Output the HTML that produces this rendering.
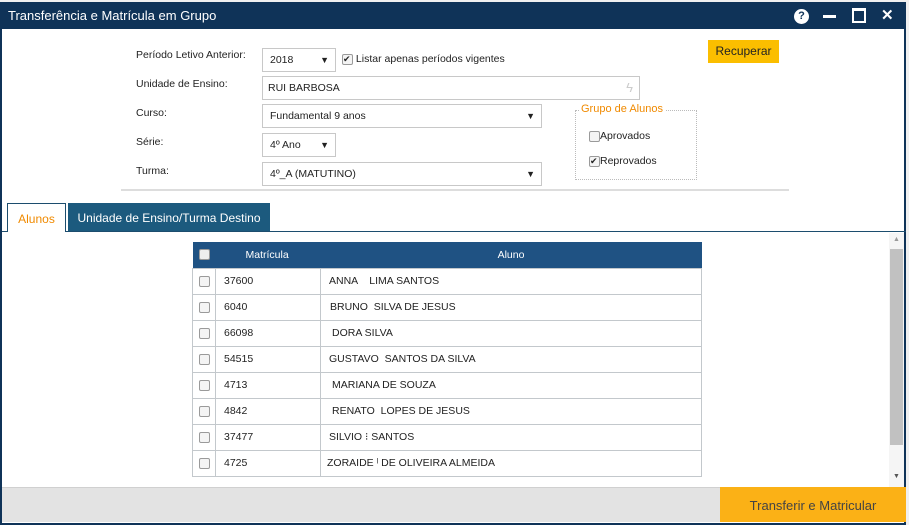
<!DOCTYPE html>
<html><head><meta charset="utf-8"><style>
*{box-sizing:border-box;margin:0;padding:0}
body{width:909px;height:525px;background:#f0f0f0;font-family:"Liberation Sans",sans-serif;font-size:11px;color:#222;position:relative;overflow:hidden}
.a{position:absolute}
.win{left:0;top:2px;width:906px;height:523px;background:#fff;border:2px solid #0f3358;border-top:0}
.title{left:0;top:2px;width:906px;height:27px;background:#0f3358;color:#fff;font-size:13px;line-height:27px;padding-left:8px}
.lbl{font-size:10.5px;color:#222}
.inp{background:#fff;border:1px solid #c8c8c8;height:24px;line-height:22px;padding-left:7px;font-size:10.5px}
.arr{position:absolute;right:6px;top:0;font-size:9px}
.cb{display:inline-block;width:11px;height:11px;border:1px solid #9a9a9a;border-radius:2px;background:#f4f4f4;vertical-align:middle}
table{border-collapse:collapse;position:absolute;left:192px;top:242px;width:510px}
td{border:1px solid #c3c8cc;height:26px;font-size:10.5px;padding:0}
th{background:#1f5283;color:#fff;font-weight:normal;height:26px;font-size:10.5px}
</style></head><body>
<div class="a win"></div>
<div class="a title">Transferência e Matrícula em Grupo</div>
<div class="a" style="left:794px;top:9px;width:15px;height:15px;border-radius:50%;background:#fff;color:#0f3358;font-weight:bold;font-size:11px;text-align:center;line-height:15px">?</div>
<div class="a" style="left:823px;top:15px;width:13px;height:3px;background:#fff"></div>
<div class="a" style="left:852px;top:8px;width:14px;height:15px;border:2px solid #fff;border-top-width:3px"></div>
<div class="a" style="left:881px;top:6px;color:#fff;font-weight:bold;font-size:15px">✕</div>

<div class="a lbl" style="left:136px;top:49px">Período Letivo Anterior:</div>
<div class="a inp" style="left:262px;top:48px;width:74px">2018<span class="arr">▼</span></div>
<div class="a" style="left:342px;top:53px;font-size:10.5px"><span class="cb" style="font-size:9px;line-height:9px">✔</span> Listar apenas períodos vigentes</div>
<div class="a" style="left:708px;top:40px;width:71px;height:23px;background:#fbbe00;line-height:23px;text-align:center;font-size:12px">Recuperar</div>

<div class="a lbl" style="left:136px;top:78px">Unidade de Ensino:</div>
<div class="a inp" style="left:262px;top:76px;width:378px;padding-left:5px">RUI BARBOSA<span class="arr" style="color:#ccc;font-size:13px">ϟ</span></div>

<div class="a lbl" style="left:136px;top:107px">Curso:</div>
<div class="a inp" style="left:262px;top:104px;width:280px">Fundamental 9 anos<span class="arr">▼</span></div>
<div class="a lbl" style="left:136px;top:136px">Série:</div>
<div class="a inp" style="left:262px;top:133px;width:74px">4º Ano<span class="arr">▼</span></div>
<div class="a lbl" style="left:136px;top:165px">Turma:</div>
<div class="a inp" style="left:262px;top:162px;width:280px">4º_A (MATUTINO)<span class="arr">▼</span></div>

<div class="a" style="left:575px;top:110px;width:122px;height:70px;border:1px dotted #bbb"></div>
<div class="a" style="left:579px;top:103px;background:#fff;color:#f08a00;padding:0 2px">Grupo de Alunos</div>
<div class="a" style="left:589px;top:130px;font-size:10.5px"><span class="cb"></span>Aprovados</div>
<div class="a" style="left:589px;top:155px;font-size:10.5px"><span class="cb" style="font-size:9px;line-height:9px">✔</span>Reprovados</div>
<div class="a" style="left:121px;top:189px;width:668px;height:2px;background:#ddd"></div>

<div class="a" style="left:2px;top:231px;width:904px;height:1px;background:#1c4d6e"></div>
<div class="a" style="left:7px;top:203px;width:59px;height:29px;background:#fff;border:1px solid #1c4d6e;border-bottom:0;color:#f08a00;font-size:12px;text-align:center;line-height:30px">Alunos</div>
<div class="a" style="left:68px;top:203px;width:202px;height:28px;background:#1c5a7e;color:#fff;font-size:12px;text-align:center;line-height:30px">Unidade de Ensino/Turma Destino</div>

<table>
<tr><th style="width:23px"><span class="cb" style="background:#eee"></span></th><th style="width:105px;text-align:left;padding-left:30px">Matrícula</th><th>Aluno</th></tr>
<tr><td style="text-align:center"><span class="cb"></span></td><td style="padding-left:8px">37600</td><td style="padding-left:8px">ANNA &nbsp;&nbsp; LIMA SANTOS</td></tr>
<tr><td style="text-align:center"><span class="cb"></span></td><td style="padding-left:8px">6040</td><td style="padding-left:9px">BRUNO &nbsp;SILVA DE JESUS</td></tr>
<tr><td style="text-align:center"><span class="cb"></span></td><td style="padding-left:8px">66098</td><td style="padding-left:11px">DORA SILVA</td></tr>
<tr><td style="text-align:center"><span class="cb"></span></td><td style="padding-left:8px">54515</td><td style="padding-left:8px">GUSTAVO &nbsp;SANTOS DA SILVA</td></tr>
<tr><td style="text-align:center"><span class="cb"></span></td><td style="padding-left:8px">4713</td><td style="padding-left:11px">MARIANA DE SOUZA</td></tr>
<tr><td style="text-align:center"><span class="cb"></span></td><td style="padding-left:8px">4842</td><td style="padding-left:11px">RENATO &nbsp;LOPES DE JESUS</td></tr>
<tr><td style="text-align:center"><span class="cb"></span></td><td style="padding-left:8px">37477</td><td style="padding-left:8px">SILVIO ⁝ SANTOS</td></tr>
<tr><td style="text-align:center"><span class="cb"></span></td><td style="padding-left:8px">4725</td><td style="padding-left:6px">ZORAIDE ˡ DE OLIVEIRA ALMEIDA</td></tr>
</table>

<div class="a" style="left:889px;top:233px;width:15px;height:254px;background:#f5f5f5"></div>
<div class="a" style="left:890px;top:249px;width:13px;height:196px;background:#c1c1c1"></div>
<div class="a" style="left:893px;top:236px;font-size:7px;color:#999">▲</div>
<div class="a" style="left:893px;top:473px;font-size:7px;color:#555">▼</div>

<div class="a" style="left:2px;top:487px;width:718px;height:35px;background:#e3e3e3;border-top:1px solid #d0d0d0"></div>
<div class="a" style="left:720px;top:487px;width:186px;height:35px;background:#fbb116;color:#444;font-size:13px;text-align:center;line-height:38px">Transferir e Matricular</div>
</body></html>
